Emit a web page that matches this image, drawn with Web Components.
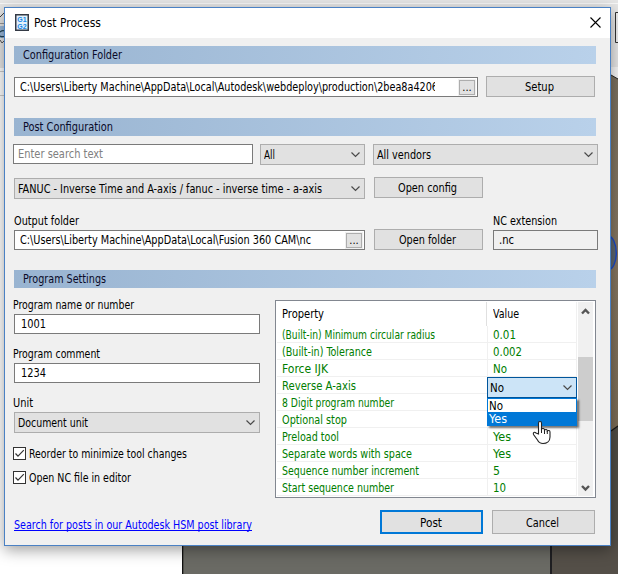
<!DOCTYPE html>
<html lang="en">
<head>
<meta charset="utf-8">
<title>Post Process</title>
<style>
html,body{margin:0;padding:0;width:618px;height:574px;overflow:hidden}
body{font:12px/15px "DejaVu Sans Condensed","DejaVu Sans",sans-serif;font-stretch:condensed;color:#000}
</style>
</head>
<body>
<post-app></post-app>
<script>
class Base extends HTMLElement{
  constructor(){super();this.attachShadow({mode:'open'});}
  connectedCallback(){this.shadowRoot.innerHTML='<style>*{box-sizing:border-box}'+this.css()+'</style>'+this.html();}
  css(){return '';}
  html(){return '<slot></slot>';}
  a(n,d=''){return this.getAttribute(n)??d;}
}
/* Single-line text condensed to a given width */
class FitText extends Base{
  css(){return ':host{display:block;white-space:pre;flex:none;line-height:17px;height:15px}span{display:inline-block;transform-origin:0 0}:host([u]) span{text-decoration:underline;text-decoration-skip-ink:none;text-decoration-thickness:1px;text-underline-offset:1px}';}
  html(){return '<span></span>';}
  connectedCallback(){
    super.connectedCallback();
    const s=this.shadowRoot.querySelector('span'),t=this.a('t'),w=+this.a('w');
    s.textContent=t;
    if(w){
      const n=s.getBoundingClientRect().width;
      s.style.transform='scaleX('+(w/n).toFixed(4)+')';
      if(!this.style.width)this.style.width=w+'px';
    }
  }
}
class SectionBar extends Base{
  css(){return ':host{display:flex;height:18px;width:582px;padding:1px 0 0 9px;box-sizing:border-box;color:#0a0a28;background:linear-gradient(90deg,#99b4d1,#b9d1ea)}';}
}
class PushButton extends Base{
  css(){return ':host{display:flex;box-sizing:border-box;flex:none;justify-content:center;align-items:center;background:#e1e1e1;border:1px solid #adadad;height:21px;width:109px;padding-right:2px}:host([primary]){border:2px solid #0078d7}';}
}
class TextBox extends Base{
  css(){return ':host{display:flex;box-sizing:border-box;flex:none;align-items:flex-start;background:#fff;border:1px solid #7a7a7a;height:20px;padding:1px 2px 0 5px;overflow:hidden}:host([off]){background:#f0f0f0}.v{flex:1;min-width:0;overflow:hidden;height:17px}.b{flex:none;width:16px;height:15px;border:1px solid #adadad;outline:1px solid #f0f0f0;background:#e1e1e1;margin-top:1px;display:flex;justify-content:center;line-height:13px;font-size:11px}';}
  html(){return '<div class="v"><slot></slot></div>'+(this.hasAttribute('browse')?'<div class="b">...</div>':'');}
}
class SelectBox extends Base{
  css(){return ':host{display:flex;box-sizing:border-box;flex:none;justify-content:space-between;background:#e1e1e1;border:1px solid #adadad;height:21px;padding:2px 4px 0 3px}svg{flex:none;margin-top:4px}';}
  html(){return '<slot></slot><svg width="9" height="8" viewBox="0 0 9 8"><path d="M.5 1.5 4.5 5.5 8.5 1.5" fill="none" stroke="#4a4a4a" stroke-width="1.2"/></svg>';}
}
class CheckItem extends Base{
  css(){return ':host{display:flex;gap:3px;height:13px}svg{flex:none}';}
  html(){return '<svg width="13" height="13"><rect x=".5" y=".5" width="12" height="12" fill="#fff" stroke="#333"/><path d="M2.5 6.5 5 9.2 10.8 3.2" fill="none" stroke="#333" stroke-width="1.2"/></svg><slot></slot>';}
}
class PropRow extends Base{
  css(){return ':host{display:grid;grid-template-columns:210px 1px 1fr;height:17px;border-bottom:1px solid #f0f0f0;box-sizing:border-box;color:#007d00}i{background:#f0f0f0}:host([head]){height:24px;color:#000;border:0;grid-template-columns:209px 1px 1fr}:host([head]) i{background:#e0e0e0}div{padding:1px 0 0 5px}:host([head]) div{padding-top:4px}:host([head]) div:last-child{padding-left:6px}';}
  html(){const k=this.a('k').split('|'),v=this.a('v').split('|');
    return `<div><fit-text t="${k[0]}" w="${k[1]}"></fit-text></div><i></i><div>${v[0]?`<fit-text t="${v[0]}" w="${v[1]}"></fit-text>`:''}</div>`;}
}
class PropTable extends Base{
  css(){return `:host{display:flex;box-sizing:border-box;width:321px;height:198px;border:1px solid #828790;background:#fff;padding:1px;position:relative}
  .rows{width:300px;height:194px;border-right:1px solid #f0f0f0}
  .sb{width:15px;margin-left:1px;background:#f0f0f0;display:flex;flex-direction:column;height:194px}
  .sb svg{flex:none}.th{height:64px;background:#cdcdcd;margin-top:38px}.sp{flex:1}
  .combo{position:absolute;left:211px;top:76px;width:90px}
  .sel{height:21px;border:1px solid #00559b;background:#cce4f7;display:flex;justify-content:space-between;padding:2px 4px 0 2px}
  .sel svg{margin-top:4px}
  .list{height:28px;border:1px solid #0078d7;background:#fff;box-shadow:2px 2px 2px rgba(0,0,0,.55)}
  .list div{height:13px;padding:1px 0 0 1px}.list fit-text{line-height:13px;height:12px}.list .on{background:#0078d7;color:#fff}
  .cur{position:absolute;left:256px;top:119px}`;}
  html(){const ch='<svg width="9" height="8" viewBox="0 0 9 8"><path d="M.5 1.5 4.5 5.5 8.5 1.5" fill="none" stroke="#4a4a4a" stroke-width="1.2"/></svg>';
  return `<div class="rows"><prop-row head k="Property|42" v="Value|26"></prop-row>
  <prop-row k="(Built-in) Minimum circular radius|153" v="0.01|23"></prop-row>
  <prop-row k="(Built-in) Tolerance|90" v="0.002|29"></prop-row>
  <prop-row k="Force IJK|46" v="No|14"></prop-row>
  <prop-row k="Reverse A-axis|74" v=""></prop-row>
  <prop-row k="8 Digit program number|112" v=""></prop-row>
  <prop-row k="Optional stop|65" v=""></prop-row>
  <prop-row k="Preload tool|57" v="Yes|18"></prop-row>
  <prop-row k="Separate words with space|130" v="Yes|18"></prop-row>
  <prop-row k="Sequence number increment|137" v="5|7"></prop-row>
  <prop-row k="Start sequence number|112" v="10|13"></prop-row></div>
  <div class="sb"><svg width="15" height="17"><path d="M4 11.5 7.5 8 11 11.5" fill="none" stroke="#555" stroke-width="2.4"/></svg><div class="th"></div><div class="sp"></div><svg width="15" height="17"><path d="M4 7 7.5 10.5 11 7" fill="none" stroke="#555" stroke-width="2.4"/></svg></div>
  <div class="combo"><div class="sel"><fit-text t="No" w="14"></fit-text>${ch}</div><div class="list"><div><fit-text t="No" w="14"></fit-text></div><div class="on"><fit-text t="Yes" w="18"></fit-text></div></div></div>
  <svg class="cur" width="20" height="25" viewBox="0 0 20 25"><path d="M6.500 14V3c0-2 3-2 3 0v6c1-1 3-.6 3 1 1-1 2.800-.6 2.800 1 1-1 2.700-.4 2.700 1v5c0 4-3 6.500-7 6.500-3 0-4.500-1.500-5.500-3.500L1.500 14.500c-.8-2 1-3 2.500-1.500z" fill="#fff" stroke="#222" stroke-width="1.1"/><path d="M9.500 8v5M12.500 10v4M15.300 11v3" stroke="#222" stroke-width="1" fill="none"/></svg>`;}
}
class BackDrop extends Base{
  css(){return ':host{display:block}svg{display:block}';}
  html(){return `<svg width="618" height="574"><defs><linearGradient id="r" x2="0" y2="1"><stop offset="0" stop-color="#7a705f"/><stop offset=".5" stop-color="#857661"/><stop offset="1" stop-color="#7b6c56"/></linearGradient></defs>
  <rect width="618" height="574" fill="#fff"/><rect width="618" height="8" fill="#e6e6e6"/><rect y="3" width="618" height="1" fill="#f8f8f8"/>
  <rect y="8" width="5" height="60" fill="#e6e6e6"/><rect y="23" width="5" height="1" fill="#9b9b9b"/><path d="M0 17 4 13" stroke="#444"/><rect y="26" width="5" height="12" fill="#9dbbdd"/><path d="M0 32c2-2 3-2 5-1M0 36c2 1 3 1 5 0" stroke="#245" stroke-width="1.200" fill="none"/><path d="M0 40 2 43 4 41" stroke="#555" fill="none"/><rect y="71" width="5" height="1" fill="#ccc"/><rect y="95" width="5" height="1" fill="#ccc"/>
  <rect x="611" y="8" width="7" height="68" fill="#e6e6e6"/><path d="M618 12.500H615.500V42.500H618" stroke="#333" fill="#eee"/><rect x="611" y="67" width="7" height="12" fill="#f6f6f6"/>
  <path d="M611 75 618 79V426L611 431Z" fill="url(#r)"/><path d="M611 75 618 79" stroke="#222"/><path d="M611 431 618 426V574H611Z" fill="#504d46"/><path d="M611 431 618 426" stroke="#151515" stroke-width="1.300"/>
  <ellipse cx="608" cy="253" rx="8.300" ry="17" fill="#5c6670" stroke="#1747c8" stroke-width="1.400"/>
  <rect x="182" y="540" width="369" height="34" fill="#6a6a64"/><rect x="182" y="540" width="1.300" height="34" fill="#111"/><rect x="551" y="540" width="67" height="34" fill="#544f48"/><rect x="550" y="540" width="2" height="34" fill="#1f1f22"/></svg>`;}
}
class PostDialog extends Base{
  css(){return `:host{display:flex;flex-direction:column;box-sizing:border-box;width:607px;height:539px;border:1px solid #4a81c4;background:#f0f0f0;box-shadow:0 4px 14px rgba(0,0,0,.38)}
  header{height:30px;background:#fff;display:flex;align-items:flex-start;padding:0 9px 0 10px}
  header .g{margin-top:6px}header fit-text{margin:7px 0 0 5px}header .x{margin:9px 0 0 auto}
  main{padding:0 0 0 9px;display:flex;flex-direction:column}
  .row{display:flex;align-items:flex-end}
  .lab{height:15px}
  .cols{display:flex;margin-top:12px;height:198px}
  .left{width:261px;display:flex;flex-direction:column}
  .foot{display:flex;margin-top:12px;height:24px}
  a{color:#00f;margin:7px 0 0 -.5px;width:366.500px;display:block}
  .foot push-button{width:103px;height:24px}`;}
  html(){return `<header><svg class="g" width="14" height="17"><rect x=".75" y=".75" width="12.500" height="15.500" fill="#e3f1fb" stroke="#343a45" stroke-width="1.500"/><g font-family="Liberation Sans,sans-serif" font-size="7" font-weight="bold" fill="#1688e8"><text x="2.200" y="8" textLength="9.500">G1</text><text x="2.200" y="14.500" textLength="9.500">G2</text></g></svg><fit-text t="Post Process" w="67"></fit-text><svg class="x" width="11" height="11"><path d="M.5 .5 10.500 10.500M10.500 .5 .5 10.500" stroke="#000" stroke-width="1.100"/></svg></header>
  <main>
  <section-bar style="margin-top:8px"><fit-text t="Configuration Folder" w="99"></fit-text></section-bar>
  <div class="row" style="margin-top:12px;gap:8px"><text-box browse style="width:464px"><fit-text style="width:415px;overflow:hidden;height:17px" t="C:\\Users\\Liberty Machine\\AppData\\Local\\Autodesk\\webdeploy\\production\\2bea8a4206" w="418"></fit-text></text-box><push-button><fit-text t="Setup" w="29"></fit-text></push-button></div>
  <section-bar style="margin-top:21px"><fit-text t="Post Configuration" w="90"></fit-text></section-bar>
  <div class="row" style="margin:8px 0 0 -1px;align-items:flex-start"><text-box style="width:240px;padding-left:4px;color:#808080"><fit-text t="Enter search text" w="85"></fit-text></text-box><select-box style="width:105px;margin-left:7px"><fit-text t="All" w="11"></fit-text></select-box><select-box style="width:225px;margin-left:8px"><fit-text t="All vendors" w="54"></fit-text></select-box></div>
  <div class="row" style="margin-top:12px;gap:9px;align-items:flex-start"><select-box style="width:351px;margin-top:1px"><fit-text t="FANUC - Inverse Time and A-axis / fanuc - inverse time - a-axis" w="304"></fit-text></select-box><push-button><fit-text t="Open config" w="59"></fit-text></push-button></div>
  <div class="row lab" style="margin-top:14px;align-items:flex-start"><fit-text style="width:479px" t="Output folder" w="65"></fit-text><fit-text t="NC extension" w="64"></fit-text></div>
  <div class="row" style="margin-top:1px;gap:9px"><text-box browse style="width:351px"><fit-text t="C:\\Users\\Liberty Machine\\AppData\\Local\\Fusion 360 CAM\\nc" w="291"></fit-text></text-box><push-button><fit-text t="Open folder" w="57"></fit-text></push-button><text-box off style="width:105px;margin-left:1px"><fit-text t=".nc" w="15"></fit-text></text-box></div>
  <section-bar style="margin-top:20px"><fit-text t="Program Settings" w="83"></fit-text></section-bar>
  <div class="cols"><div class="left">
   <fit-text style="margin:-3px 0 0 -1px" t="Program name or number" w="121"></fit-text>
   <text-box style="width:246px;margin-top:2px;padding-left:6px"><fit-text t="1001" w="25"></fit-text></text-box>
   <fit-text style="margin:12px 0 0 -1px" t="Program comment" w="87"></fit-text>
   <text-box style="width:246px;margin-top:2px;padding-left:6px"><fit-text t="1234" w="25"></fit-text></text-box>
   <fit-text style="margin:12px 0 0 -1px" t="Unit" w="20"></fit-text>
   <select-box style="width:246px;margin-top:2px"><fit-text t="Document unit" w="70"></fit-text></select-box>
   <check-item style="margin:14px 0 0 -1px"><fit-text style="margin-top:-1px" t="Reorder to minimize tool changes" w="158"></fit-text></check-item>
   <check-item style="margin:11px 0 0 -1px"><fit-text style="margin-top:-1px" t="Open NC file in editor" w="102"></fit-text></check-item>
  </div><prop-table></prop-table></div>
  <div class="foot"><a><fit-text u t="Search for posts in our Autodesk HSM post library" w="238"></fit-text></a><push-button primary><fit-text t="Post" w="22"></fit-text></push-button><push-button style="margin-left:9px"><fit-text t="Cancel" w="33"></fit-text></push-button></div>
  </main>`;}
}
class PostApp extends Base{
  css(){return ':host{display:block;position:relative;width:618px;height:574px;overflow:hidden}post-dialog{position:absolute;left:4px;top:7px}';}
  html(){return '<back-drop></back-drop><post-dialog></post-dialog>';}
}
for(const [n,c] of [['fit-text',FitText],['section-bar',SectionBar],['push-button',PushButton],['text-box',TextBox],['select-box',SelectBox],['check-item',CheckItem],['prop-row',PropRow],['prop-table',PropTable],['back-drop',BackDrop],['post-dialog',PostDialog],['post-app',PostApp]])customElements.define(n,c);
</script>
</body>
</html>
